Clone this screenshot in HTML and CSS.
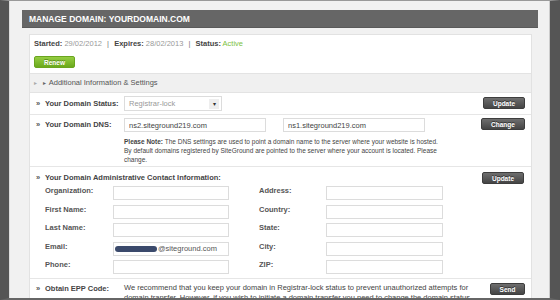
FILE: index.html
```html
<!DOCTYPE html>
<html lang="en">
<head>
    <meta charset="UTF-8">
    <title>Manage Domain</title>
    <link rel="stylesheet" href="styles.css">
</head>
<body>
    <div class="screen">
        <div class="panel">
            <div class="panel-title">MANAGE DOMAIN: YOURDOMAIN.COM</div>
            <div class="panel-body">
                <div class="box">
                    <div class="summary">
                        <div class="dates">
                            <b>Started:</b> <span class="muted">29/02/2012</span>
                            <span class="sep">|</span>
                            <b>Expires:</b> <span class="muted">28/02/2013</span>
                            <span class="sep">|</span>
                            <b>Status:</b> <span class="active">Active</span>
                        </div>
                        <button class="btn btn-green">Renew</button>
                    </div>

                    <div class="toggle">
                        <span class="tri tri-light">&#9656;</span>
                        <span class="tri">&#9656;</span>
                        Additional Information &amp; Settings
                    </div>

                    <div class="row row-status">
                        <span class="mark">&raquo;</span>
                        <span class="label">Your Domain Status:</span>
                        <div class="select">
                            <span>Registrar-lock</span>
                            <span class="arrow">&#9662;</span>
                        </div>
                        <button class="btn btn-dark btn-update">Update</button>
                    </div>

                    <div class="row row-dns">
                        <span class="mark">&raquo;</span>
                        <span class="label">Your Domain DNS:</span>
                        <div class="row-main">
                            <div class="dns-inputs">
                                <input type="text" class="field field-dns" value="ns2.siteground219.com">
                                <input type="text" class="field field-dns" value="ns1.siteground219.com">
                            </div>
                            <p class="note"><b>Please Note:</b> The DNS settings are used to point a domain name to the server where your website is hosted.<br>By default domains registered by SiteGround are pointed to the server where your account is located. Please change.</p>
                        </div>
                        <button class="btn btn-dark btn-change">Change</button>
                    </div>

                    <div class="row row-contact">
                        <span class="mark">&raquo;</span>
                        <div class="row-main">
                            <div class="row-head">
                                <span class="label">Your Domain Administrative Contact Information:</span>
                                <button class="btn btn-dark btn-update">Update</button>
                            </div>
                            <div class="fields">
                                <span class="flabel">Organization:</span>
                                <input type="text" class="field">
                                <span class="flabel">Address:</span>
                                <input type="text" class="field">

                                <span class="flabel">First Name:</span>
                                <input type="text" class="field">
                                <span class="flabel">Country:</span>
                                <input type="text" class="field">

                                <span class="flabel">Last Name:</span>
                                <input type="text" class="field">
                                <span class="flabel">State:</span>
                                <input type="text" class="field">

                                <span class="flabel">Email:</span>
                                <div class="field field-email"><span class="redacted"></span>@siteground.com</div>
                                <span class="flabel">City:</span>
                                <input type="text" class="field">

                                <span class="flabel">Phone:</span>
                                <input type="text" class="field">
                                <span class="flabel">ZIP:</span>
                                <input type="text" class="field">
                            </div>
                        </div>
                    </div>

                    <div class="row row-epp">
                        <span class="mark">&raquo;</span>
                        <span class="label">Obtain EPP Code:</span>
                        <p class="epp-text">We recommend that you keep your domain in Registrar-lock status to prevent unauthorized attempts for domain transfer. However, if you wish to initiate a domain transfer you need to change the domain status first.</p>
                        <button class="btn btn-dark btn-send">Send</button>
                    </div>
                </div>
            </div>
        </div>
    </div>
</body>
</html>
```

FILE: styles.css
```css
* {
    margin: 0;
    padding: 0;
    box-sizing: border-box;
}

body {
    font-family: "Liberation Sans", Arial, sans-serif;
    font-size: 7.5px;
    color: #444;
    background: #f1f1f1;
}

.screen {
    height: 300px;
    overflow: hidden;
    background: #f1f1f1;
    border-left: 9px solid #555;
    border-right: 10px solid #555;
    border-top: 1px solid #999;
    border-bottom: 2px solid #666;
    padding: 9px 12px 0 13px;
    box-shadow: inset 1px 0 0 #ddd, inset -1px 0 0 #ccc;
}

.panel-title {
    height: 18px;
    line-height: 18px;
    background: #666;
    border-bottom: 1px solid #5a5a5a;
    color: #fff;
    font-weight: bold;
    font-size: 8.5px;
    padding-left: 7px;
}

.panel-body {
    padding: 6px 6px 0 7px;
}

.box {
    background: #fff;
    border: 1px solid #e2e2e2;
}

/* top summary */
.summary {
    padding: 4px 4px 5px;
}

.dates {
    line-height: 10px;
    color: #444;
}

.dates b {
    color: #444;
}

.muted {
    color: #999;
}

.sep {
    color: #777;
    margin: 0 3px;
}

.active {
    color: #7dc242;
}

.btn {
    display: block;
    height: 12px;
    border-radius: 2px;
    color: #fff;
    font-family: inherit;
    font-weight: bold;
    font-size: 6.5px;
    cursor: pointer;
    flex-shrink: 0;
}

.btn-green {
    width: 41px;
    margin-top: 7px;
    background: linear-gradient(#95cd42, #6ba91d);
    border: 1px solid #6aa51f;
    text-shadow: 0 -1px 0 #5a8f18;
}

.btn-dark {
    background: linear-gradient(#6e6e6e, #454545);
    border: 1px solid #3d3d3d;
    text-shadow: 0 -1px 0 #333;
}

.btn-update {
    width: 42px;
}

.btn-change {
    width: 44px;
}

.btn-send {
    width: 35px;
}

/* collapsed settings bar */
.toggle {
    height: 20px;
    line-height: 18px;
    background: #f0f0f0;
    border-top: 1px solid #e3e3e3;
    border-bottom: 1px solid #e3e3e3;
    color: #555;
    padding-left: 4px;
}

.tri {
    font-size: 6px;
    color: #666;
    margin-right: 1px;
}

.tri-light {
    color: #aaa;
    margin-right: 4px;
}

/* rows */
.row {
    display: flex;
    align-items: flex-start;
    padding: 0 6px 0 6px;
    border-bottom: 1px solid #e6e6e6;
}

.mark {
    width: 9px;
    font-weight: bold;
    color: #555;
    line-height: 10px;
    flex-shrink: 0;
}

.label {
    width: 79px;
    font-weight: bold;
    color: #444;
    line-height: 10px;
    flex-shrink: 0;
}

.row-main {
    flex: 1;
}

.row-status {
    align-items: center;
    height: 22px;
}

.row-status .mark,
.row-status .label {
    line-height: 15px;
}

.select {
    width: 98px;
    height: 15px;
    border: 1px solid #dcdcdc;
    display: flex;
    align-items: center;
    justify-content: space-between;
    padding: 0 2px 0 4px;
    color: #999;
    margin-right: auto;
}

.arrow {
    width: 10px;
    height: 10px;
    background: #eee;
    color: #333;
    font-size: 6px;
    line-height: 10px;
    text-align: center;
}

.row-status .btn {
    margin-bottom: 1px;
}

.row-dns {
    padding-top: 3px;
    padding-bottom: 2px;
}

.row-dns .mark,
.row-dns .label {
    line-height: 14px;
}

.dns-inputs {
    display: flex;
    gap: 17px;
}

.field {
    display: block;
    height: 14px;
    border: 1px solid #dcdcdc;
    background: #fff;
    font-family: inherit;
    font-size: 7.5px;
    color: #444;
    padding: 0 4px;
    outline: none;
}

.field-dns {
    width: 142px;
}

.note {
    margin-top: 4.5px;
    width: 330px;
    font-size: 6.5px;
    line-height: 9.3px;
    color: #444;
}

.row-dns .btn {
    margin-top: 0;
    margin-left: 10px;
}

.row-contact {
    padding-top: 6px;
    padding-bottom: 4px;
}

.row-head {
    display: flex;
    justify-content: space-between;
    align-items: center;
    height: 10px;
    padding-right: 1px;
}

.row-head .label {
    width: auto;
}

.fields {
    display: grid;
    grid-template-columns: 68px 116px 30px 67px 117px;
    row-gap: 4.5px;
    margin-top: 3px;
}

.fields .flabel:nth-child(4n+3) {
    grid-column: 4;
}

.flabel {
    font-weight: bold;
    color: #555;
    line-height: 10px;
    padding-top: 0;
}

.field-email {
    display: flex;
    align-items: center;
    padding: 0 1px;
    color: #555;
}

.redacted {
    width: 42px;
    height: 6px;
    border-radius: 3px;
    background: #3b4a6c;
    margin-right: 1px;
}

.row-epp {
    padding-top: 4px;
    border-bottom: none;
}

.row-epp .mark,
.row-epp .label {
    line-height: 12px;
}

.epp-text {
    width: 352px;
    line-height: 10px;
    color: #444;
    margin-right: auto;
}
```
